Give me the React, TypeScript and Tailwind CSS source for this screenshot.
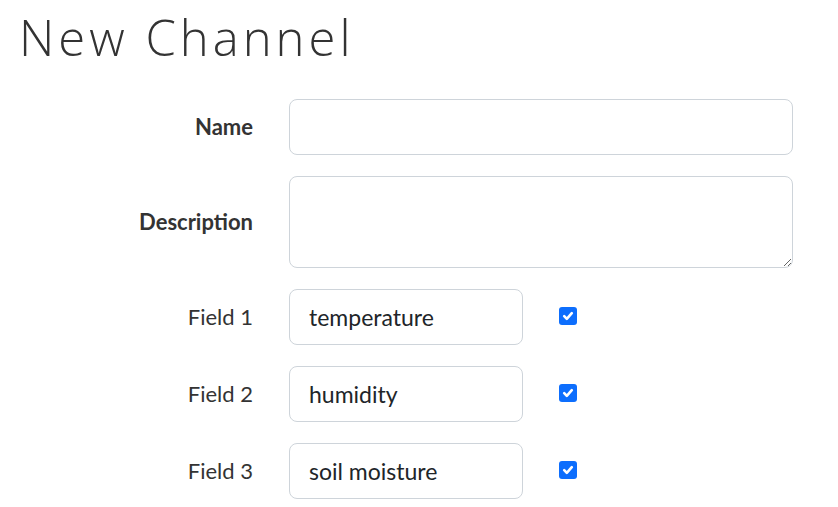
export default function App() {
  const fields = [
    { label: 'Field 1', value: 'temperature' },
    { label: 'Field 2', value: 'humidity' },
    { label: 'Field 3', value: 'soil moisture' },
  ]

  return (
    <div className="w-[838px] h-[507px] overflow-hidden bg-white text-[#333] font-['Lato',sans-serif]">
      <h1 className="pl-[19px] pt-[8px] text-[49px] leading-[58px] font-light tracking-[4px] text-[#333] font-['Open_Sans',sans-serif]">
        New Channel
      </h1>

      <div className="mt-[33px] flex flex-col gap-[21px]">
        <div className="flex items-center">
          <label className="w-[253px] -mt-[1px] text-right text-[22px] font-bold text-[#333]">Name</label>
          <input
            type="text"
            className="ml-[36px] w-[504px] h-[56px] rounded-[8px] border border-[#ced4da] px-[20px] text-[23px] outline-none"
          />
        </div>

        <div className="flex items-center">
          <label className="w-[253px] -mt-[1px] text-right text-[22px] font-bold text-[#333]">Description</label>
          <textarea className="ml-[36px] w-[504px] h-[92px] rounded-[8px] border border-[#ced4da] px-[20px] py-[10px] text-[23px] outline-none resize-y" />
        </div>

        {fields.map((f) => (
          <div key={f.label} className="flex items-center">
            <label className="w-[253px] -mt-[2px] text-right text-[22px] text-[#333]">{f.label}</label>
            <input
              type="text"
              defaultValue={f.value}
              className="ml-[36px] w-[234px] h-[56px] rounded-[8px] border border-[#ced4da] px-[19px] text-[23px] text-[#212529] outline-none"
            />
            <span className="ml-[36px] -mt-[3px] w-[18px] h-[18px] rounded-[3px] bg-[#0d6efd] flex items-center justify-center">
              <svg width="12" height="12" viewBox="0 0 12 12" fill="none">
                <path d="M2.2 6.2 L4.8 8.8 L9.8 3.2" stroke="white" strokeWidth="2.6" strokeLinecap="round" strokeLinejoin="round" />
              </svg>
            </span>
          </div>
        ))}
      </div>
    </div>
  )
}
